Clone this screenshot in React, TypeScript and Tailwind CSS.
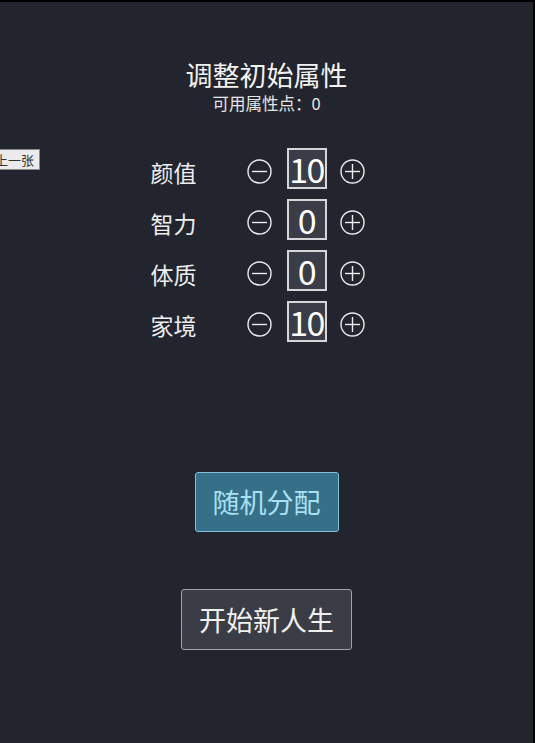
import React from "react";

const FONT = { fontFamily: '"Noto Sans CJK SC", "Noto Sans", sans-serif' };

function CircleIcon({ plus }: { plus?: boolean }) {
  return (
    <svg width="25" height="25" viewBox="0 0 25 25" className="block">
      <circle cx="12.5" cy="12.5" r="11.5" fill="none" stroke="#ececec" strokeWidth="1.4" />
      <line x1="5" y1="12.5" x2="20" y2="12.5" stroke="#ececec" strokeWidth="1.4" />
      {plus && <line x1="12.5" y1="5" x2="12.5" y2="20" stroke="#ececec" strokeWidth="1.4" />}
    </svg>
  );
}

const rows: [string, number][] = [
  ["颜值", 10],
  ["智力", 0],
  ["体质", 0],
  ["家境", 10],
];

export default function App() {
  return (
    <div
      className="relative h-[743px] w-full overflow-hidden bg-[#22252d] border-t-2 border-r-2 border-black text-[#eeeeee]"
      style={FONT}
    >
      <button className="absolute left-[-11px] top-[147px] border border-[#8a8a8a] bg-[#ebebeb] px-[5px] py-[1px] text-[13px] leading-[17px] text-[#333]">
        上一张
      </button>
      <div className="flex flex-col items-center pt-[58px]">
        <div className="text-[27px] leading-[30px] text-[#f2f2f2]">调整初始属性</div>
        <div className="mt-[3px] text-[16.5px] leading-[20px] text-[#e6e6e6]">可用属性点：0</div>
        <div className="mt-[35px] flex w-[232px] flex-col gap-[10px]">
          {rows.map(([label, v]) => (
            <div key={label} className="flex h-[41px] items-center">
              <div className="mt-[7px] w-[96px] text-[23px] leading-[30px] text-[#eeeeee]">{label}</div>
              <div className="mt-[5px]">
                <CircleIcon />
              </div>
              <div className="ml-[15px] flex h-[41px] w-[40px] items-center justify-center border-2 border-[#d6d6d6] bg-[#3a3d47] text-[34px] leading-[37px] tracking-[-1.5px] text-white">
                {v}
              </div>
              <div className="ml-[13px] mt-[5px]">
                <CircleIcon plus />
              </div>
            </div>
          ))}
        </div>
        <button className="mt-[130px] rounded-[3px] border border-[#7fc2da] bg-[#367088] px-[17px] py-[9px] text-[27px] leading-[40px] text-[#a9e0f2]">
          随机分配
        </button>
        <button className="mt-[57px] rounded-[3px] border border-[#a0a2a8] bg-[#3a3d46] px-[17px] py-[10px] text-[27px] leading-[39px] text-[#f0f0f0]">
          开始新人生
        </button>
      </div>
    </div>
  );
}
